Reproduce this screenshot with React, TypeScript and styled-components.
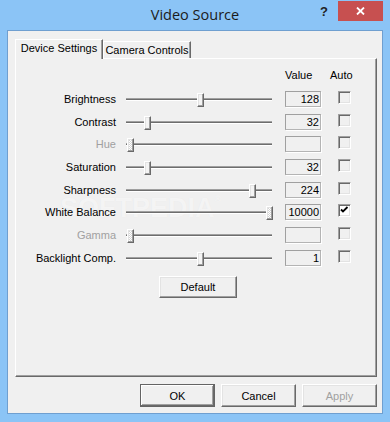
import React from 'react'
import styled, { createGlobalStyle, css } from 'styled-components'

const GlobalStyle = createGlobalStyle`
    html, body {
        margin: 0;
        padding: 0;
    }
    body {
        font-family: 'Liberation Sans', Arial, sans-serif;
        font-size: 11px;
        color: #000;
    }
`

// classic 3D edges
const raised = css`
    border: 1px solid;
    border-color: #fff #696969 #696969 #fff;
    box-shadow: inset -1px -1px #a0a0a0, inset 1px 1px #e3e3e3;
`

const Window = styled.div`
    width: 390px;
    height: 422px;
    background: #8bc4f6;
    display: flex;
    flex-direction: column;
`

const TitleBar = styled.div`
    height: 30px;
    display: grid;
    grid-template-columns: 1fr auto 1fr;
    align-items: start;
`

const Title = styled.div`
    grid-column: 2;
    font-family: 'Open Sans', 'Noto Sans', sans-serif;
    font-size: 14.5px;
    line-height: 30px;
    color: #1b1b1b;
`

const Controls = styled.div`
    grid-column: 3;
    justify-self: end;
    display: flex;
    padding: 1px 7px 0 0;
`

const HelpButton = styled.div`
    width: 28px;
    height: 20px;
    display: flex;
    align-items: center;
    justify-content: center;
    font-family: 'Liberation Sans', Arial, sans-serif;
    font-weight: bold;
    font-size: 13px;
    color: #222;
`

const CloseButton = styled.div`
    width: 45px;
    height: 20px;
    background: #c75050;
    display: flex;
    align-items: center;
    justify-content: center;
`

const Client = styled.div`
    flex: 1;
    margin: 0 7px 8px;
    border: 1px solid #6f9fd0;
    background: #f0f0f0;
    padding: 8px 5px 6px 7px;
    display: flex;
    flex-direction: column;
`

const TabStrip = styled.div`
    height: 19px;
    display: flex;
    align-items: flex-end;
    position: relative;
    z-index: 1;
`

const Tab = styled.div<{ $active?: boolean; $w: number }>`
    width: ${(p) => p.$w}px;
    box-sizing: border-box;
    border-top: 1px solid #fff;
    border-left: 1px solid #fff;
    border-right: 1px solid #696969;
    box-shadow: inset -1px 0 #a0a0a0;
    background: #f0f0f0;
    text-align: center;
    line-height: 16px;
    height: ${(p) => (p.$active ? 20 : 17)}px;
    margin-bottom: ${(p) => (p.$active ? -1 : 0)}px;
`

const Panel = styled.div`
    flex: 1;
    position: relative;
    border: 1px solid;
    border-color: #fff #696969 #696969 #fff;
    box-shadow: inset -1px -1px #a0a0a0;
    padding-top: 8px;
`

const Content = styled.div`
    position: relative;
    z-index: 1;
`

const HeaderRow = styled.div`
    display: flex;
    height: 16px;
    line-height: 16px;
    padding-left: 269px;
    margin-bottom: 8px;
`

const ValueHead = styled.div`
    width: 36px;
`

const AutoHead = styled.div`
    margin-left: 9px;
`

const Row = styled.div`
    display: flex;
    align-items: flex-start;
    height: 22.7px;
`

const Label = styled.div<{ $disabled?: boolean }>`
    width: 100px;
    text-align: right;
    line-height: 16px;
    white-space: nowrap;
    color: ${(p) => (p.$disabled ? '#a0a0a0' : '#000')};
`

const Slider = styled.div`
    position: relative;
    width: 146px;
    height: 16px;
    margin-left: 10px;
    display: flex;
    align-items: center;
`

const Track = styled.div`
    flex: 1;
    height: 1px;
    border-top: 1px solid #a0a0a0;
    background: #6d6d6d;
    border-bottom: 1px solid #fff;
    margin-top: 1px;
`

const Thumb = styled.div<{ $dotted?: boolean }>`
    position: absolute;
    top: 2px;
    width: 7px;
    height: 14px;
    box-sizing: border-box;
    ${raised};
    background: #f4f4f4;
    ${(p) =>
        p.$dotted &&
        css`
            background: repeating-conic-gradient(#fff 0 25%, #d4d4d4 0 50%) 0 0 / 2px 2px;
        `}
`

const ValueBox = styled.div`
    width: 36px;
    height: 16px;
    box-sizing: border-box;
    margin-left: 13px;
    border: 1px solid;
    border-color: #a0a0a0 #b4b4b4 #b4b4b4 #a0a0a0;
    box-shadow: 1px 1px #fff;
    text-align: right;
    line-height: 14px;
    padding-right: 1px;
`

const Check = styled.div<{ $checked?: boolean }>`
    width: 13px;
    height: 13px;
    box-sizing: border-box;
    margin-left: 17px;
    border: 1px solid;
    border-color: #a0a0a0 #fff #fff #a0a0a0;
    box-shadow: inset 1px 1px #696969, inset -1px -1px #e3e3e3;
    background: ${(p) => (p.$checked ? '#fff' : '#f0f0f0')};
    display: flex;
`

const ButtonRow = styled.div`
    display: flex;
    margin-top: 3px;
    padding-left: 143px;
`

const PushButton = styled.div<{ $w: number; $h: number; $default?: boolean; $disabled?: boolean }>`
    width: ${(p) => p.$w}px;
    height: ${(p) => p.$h}px;
    box-sizing: border-box;
    ${raised};
    background: #f0f0f0;
    ${(p) =>
        p.$default &&
        css`
            border-color: #646464;
            box-shadow: inset -1px -1px #696969, inset 1px 1px #fff, inset -2px -2px #a0a0a0;
        `}
    display: flex;
    align-items: center;
    justify-content: center;
    color: ${(p) => (p.$disabled ? '#a0a0a0' : '#000')};
`

const DialogButtons = styled.div`
    display: flex;
    justify-content: flex-end;
    gap: 6px;
    margin-top: 7px;
`

// faint stamp drawn behind the controls
const Watermark = styled.div`
    position: absolute;
    top: 136px;
    left: 44px;
    z-index: 0;
    font-family: 'Liberation Sans', Arial, sans-serif;
    font-weight: bold;
    font-size: 27px;
    line-height: 1;
    color: rgba(255, 255, 255, 0.6);
    text-shadow: 0 0 1px rgba(0, 0, 0, 0.05);
    pointer-events: none;
    sup {
        font-size: 9px;
        vertical-align: top;
    }
`

type SettingRow = {
    label: string
    value?: string
    pos: number
    disabled?: boolean
    focused?: boolean
    auto?: boolean
}

const ROWS: SettingRow[] = [
    { label: 'Brightness', value: '128', pos: 128 / 255 },
    { label: 'Contrast', value: '32', pos: 32 / 255 },
    { label: 'Hue', pos: 0, disabled: true },
    { label: 'Saturation', value: '32', pos: 32 / 255 },
    { label: 'Sharpness', value: '224', pos: 224 / 255 },
    { label: 'White Balance', value: '10000', pos: 1, focused: true, auto: true },
    { label: 'Gamma', pos: 0, disabled: true },
    { label: 'Backlight Comp.', value: '1', pos: 0.5 },
]

const THUMB_RANGE = 139

const App: React.FC = () => {
    return (
        <>
            <GlobalStyle />
            <Window>
                <TitleBar>
                    <Title>Video Source</Title>
                    <Controls>
                        <HelpButton>?</HelpButton>
                        <CloseButton>
                            <svg width="9" height="8" viewBox="0 0 9 8">
                                <path d="M1 0.5 L8 7.5 M8 0.5 L1 7.5" stroke="#fff" strokeWidth="1.8" />
                            </svg>
                        </CloseButton>
                    </Controls>
                </TitleBar>

                <Client>
                    <TabStrip>
                        <Tab $active $w={88}>Device Settings</Tab>
                        <Tab $w={88}>Camera Controls</Tab>
                    </TabStrip>

                    <Panel>
                        <Watermark>
                            SOFTPEDIA<sup>®</sup>
                        </Watermark>

                        <Content>
                            <HeaderRow>
                                <ValueHead>Value</ValueHead>
                                <AutoHead>Auto</AutoHead>
                            </HeaderRow>

                            {ROWS.map((row) => (
                                <Row key={row.label}>
                                    <Label $disabled={row.disabled}>{row.label}</Label>
                                    <Slider>
                                        <Track />
                                        <Thumb
                                            $dotted={row.disabled || row.focused}
                                            style={{ left: 1 + row.pos * THUMB_RANGE }}
                                        />
                                    </Slider>
                                    <ValueBox>{row.value}</ValueBox>
                                    <Check $checked={row.auto}>
                                        {row.auto && (
                                            <svg width="11" height="11" viewBox="0 0 11 11">
                                                <path
                                                    d="M2 4.5 L4 6.5 L8.5 2"
                                                    stroke="#000"
                                                    strokeWidth="1.8"
                                                    fill="none"
                                                />
                                            </svg>
                                        )}
                                    </Check>
                                </Row>
                            ))}

                            <ButtonRow>
                                <PushButton $w={78} $h={22}>Default</PushButton>
                            </ButtonRow>
                        </Content>
                    </Panel>

                    <DialogButtons>
                        <PushButton $w={75} $h={23} $default>OK</PushButton>
                        <PushButton $w={75} $h={23}>Cancel</PushButton>
                        <PushButton $w={75} $h={23} $disabled>Apply</PushButton>
                    </DialogButtons>
                </Client>
            </Window>
        </>
    )
}

export default App
